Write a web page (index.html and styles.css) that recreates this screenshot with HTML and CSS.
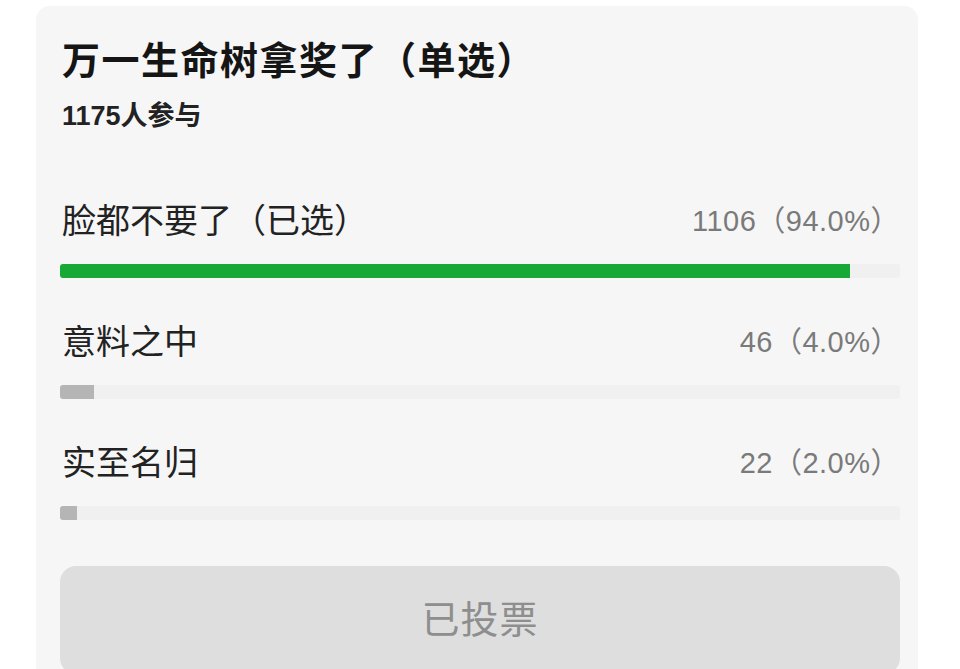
FILE: index.html
```html
<!DOCTYPE html>
<html lang="zh-CN">
<head>
<meta charset="utf-8">
<title>投票</title>
<link rel="stylesheet" href="styles.css">
</head>
<body>
<div class="card">
  <h1 class="title">万一生命树拿奖了（单选）</h1>
  <div class="sub">1175人参与</div>
  <div class="options">
    <div class="option">
      <div class="head"><span class="label">脸都不要了（已选）</span><span class="count">1106（94.0%）</span></div>
      <div class="track"><div class="fill fill-green" style="width:94.0%"></div></div>
    </div>
    <div class="option">
      <div class="head"><span class="label">意料之中</span><span class="count">46（4.0%）</span></div>
      <div class="track"><div class="fill fill-gray" style="width:4.0%"></div></div>
    </div>
    <div class="option">
      <div class="head"><span class="label">实至名归</span><span class="count">22（2.0%）</span></div>
      <div class="track"><div class="fill fill-gray" style="width:2.0%"></div></div>
    </div>
  </div>
  <div class="btn">已投票</div>
</div>
</body>
</html>
```
FILE: styles.css
```css
html, body {
  margin: 0;
  padding: 0;
  background: #ffffff;
  height: 669px;
  overflow: hidden;
}
body {
  font-family: "Liberation Sans", "Noto Sans CJK SC", sans-serif;
  color: #1c1c1c;
}
.card {
  margin: 6px 0 0 36px;
  width: 882px;
  box-sizing: border-box;
  background: #f6f6f6;
  border-radius: 14px;
  padding: 28px 18px 0 24px;
  height: 720px;
}
.title {
  margin: 0;
  padding-left: 2px;
  font-family: "Noto Sans CJK SC", sans-serif;
  font-size: 38px;
  line-height: 48px;
  font-weight: 700;
  letter-spacing: 1.5px;
  color: #151515;
}
.sub {
  margin-top: 16px;
  padding-left: 2px;
  font-size: 27px;
  line-height: 36px;
  font-weight: 700;
  color: #222222;
}
.options {
  margin-top: 62px;
  display: flex;
  flex-direction: column;
  gap: 39px;
}
.head {
  display: flex;
  justify-content: space-between;
  align-items: center;
  height: 44px;
  padding: 0 0 0 2px;
}
.label {
  font-size: 34px;
  color: #222222;
}
.count {
  font-size: 29px;
  color: #7a7a7a;
  letter-spacing: 0.5px;
}
.track {
  margin-top: 24px;
  height: 14px;
  background: #f0f0f0;
  border-radius: 3px;
}
.fill {
  height: 100%;
  border-radius: 3px 0 0 3px;
}
.fill-green {
  background: #17a935;
}
.fill-gray {
  background: #b5b5b5;
}
.btn {
  margin-top: 46px;
  height: 108px;
  line-height: 108px;
  background: #dedede;
  border-radius: 16px;
  text-align: center;
  font-size: 38px;
  color: #8e8e8e;
  letter-spacing: 1px;
}
```
